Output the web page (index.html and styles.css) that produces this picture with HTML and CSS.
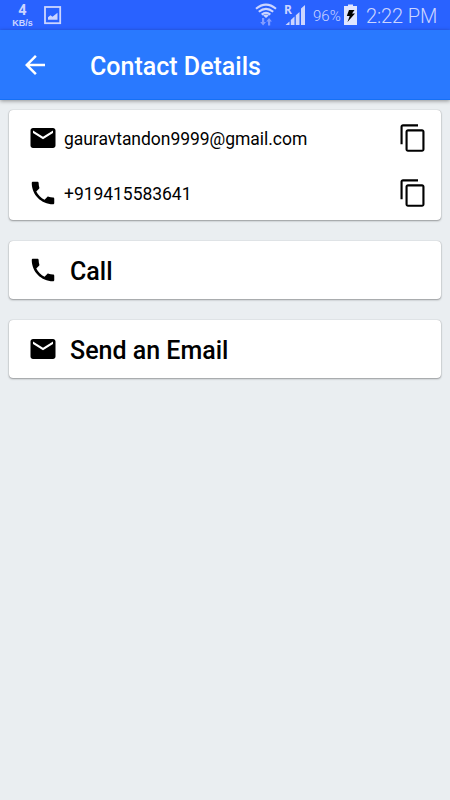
FILE: index.html
```html
<!DOCTYPE html>
<html lang="en">
<head>
    <title>Contact Details</title>
    <meta charset="UTF-8">
    <meta name="viewport" content="width=device-width, initial-scale=1.0">
    <link rel="stylesheet" href="styles.css">
</head>
<body>
    <!-- shared icons -->
    <svg class="sprite">
        <symbol id="mail" viewBox="0 0 24 24">
            <path d="M20 4H4c-1.1 0-1.99.9-1.99 2L2 18c0 1.1.9 2 2 2h16c1.1 0 2-.9 2-2V6c0-1.1-.9-2-2-2zm0 4l-8 5-8-5V6l8 5 8-5v2z"/>
        </symbol>
        <symbol id="phone" viewBox="0 0 24 24">
            <path d="M6.62 10.79c1.44 2.83 3.76 5.14 6.59 6.59l2.2-2.2c.27-.27.67-.36 1.02-.24 1.12.37 2.33.57 3.57.57.55 0 1 .45 1 1V20c0 .55-.45 1-1 1-9.39 0-17-7.61-17-17 0-.55.45-1 1-1h3.5c.55 0 1 .45 1 1 0 1.25.2 2.45.57 3.57.11.35.03.74-.25 1.02l-2.2 2.2z"/>
        </symbol>
        <symbol id="copy" viewBox="0 0 24 24">
            <path d="M16 1H4c-1.1 0-2 .9-2 2v14h1.7V2.7H16V1zm3.2 4H8c-1.1 0-2 .9-2 2v14c0 1.1.9 2 2 2h11.2c1.1 0 2-.9 2-2V7c0-1.1-.9-2-2-2zm.3 16.3H7.7V6.7h11.8v14.6z"/>
        </symbol>
    </svg>

    <div class="status-bar">
        <div class="net-speed">
            <span class="speed-value">4</span>
            <span class="speed-unit">KB/s</span>
        </div>
        <svg class="picture" width="18" height="19" viewBox="0 0 18 19">
            <rect x="1" y="1" width="15.2" height="16.2" fill="none" stroke="#ccd5ff" stroke-width="1.8"/>
            <path d="M4 13.8v-2.5l2.5-2 2 1.5 5-4v7z" fill="#ccd5ff"/>
        </svg>
        <svg class="wifi" width="22" height="24" viewBox="0 0 22 24">
            <g fill="none" stroke="#ccd5ff" stroke-width="2.1">
                <path d="M1 6.8Q11-1.4 21 6.8"/>
                <path d="M3.8 9.8Q11 3.8 18.2 9.8"/>
                <path d="M6.7 12.6Q11 9 15.3 12.6"/>
            </g>
            <path d="M8.2 13.6Q11 11.6 13.8 13.6L11 16z" fill="#ccd5ff"/>
            <path d="M7 16h2.2v4h1.8l-2.9 3.5L5.2 20H7zM13 23.5h2.2v-4H17L14.1 16l-2.9 3.5H13z" fill="#829cff"/>
        </svg>
        <div class="signal">
            <span class="roaming">R</span>
            <svg width="22" height="22" viewBox="0 0 22 22">
                <path d="M.5 21l4-3.6V21zM5.8 21v-5l3.7-3.4V21zM10.8 21v-9.8L14.5 8v13zM16 21V4.5L20 1v20z" fill="#ccd5ff"/>
            </svg>
        </div>
        <span class="percent">96%</span>
        <svg class="battery" width="14" height="22" viewBox="0 0 14 22">
            <path d="M4 .5h5V2h4v19H0V2h4z" fill="#dfe5ff"/>
            <path d="M5 6h5.5L8 9.5h3L3.5 18 5.7 12H2.8z" fill="#000"/>
        </svg>
        <span class="clock">2:22 PM</span>
    </div>

    <header class="toolbar">
        <svg class="icon back" viewBox="0 0 24 24">
            <path d="M20 11H7.83l5.59-5.59L12 4l-8 8 8 8 1.41-1.41L7.83 13H20v-2z"/>
        </svg>
        <h1>Contact Details</h1>
    </header>

    <main class="content">
        <div class="card">
            <div class="row">
                <svg class="icon"><use href="#mail"/></svg>
                <span class="detail">gauravtandon9999@gmail.com</span>
                <svg class="icon copy"><use href="#copy"/></svg>
            </div>
            <div class="row">
                <svg class="icon"><use href="#phone"/></svg>
                <span class="detail">+919415583641</span>
                <svg class="icon copy"><use href="#copy"/></svg>
            </div>
        </div>

        <div class="card action">
            <svg class="icon"><use href="#phone"/></svg>
            <span class="label">Call</span>
        </div>

        <div class="card action">
            <svg class="icon"><use href="#mail"/></svg>
            <span class="label">Send an Email</span>
        </div>
    </main>
</body>
</html>
```
FILE: styles.css
```css
* {
    box-sizing: border-box;
}
body {
    margin: 0;
    min-height: 800px;
    background-color: #eaeef1;
    color: #000;
    font-family: Roboto, sans-serif;
}
svg {
    display: block;
    flex: none;
}
.sprite {
    position: absolute;
    width: 0;
    height: 0;
}
.icon {
    width: 30px;
    height: 30px;
}
.status-bar {
    display: flex;
    align-items: flex-start;
    height: 30px;
    padding-left: 11px;
    background-color: #2962ff;
    color: #ccd5ff;
    white-space: nowrap;
}
.net-speed {
    display: flex;
    flex-direction: column;
    align-items: center;
    width: 23px;
    padding-top: 3px;
    font-family: "Liberation Sans", sans-serif;
    font-weight: bold;
}
.speed-value {
    font-family: Roboto, sans-serif;
    font-size: 14.5px;
    line-height: 15px;
}
.speed-unit {
    margin-top: 1px;
    font-size: 9px;
    line-height: 9px;
}
.picture {
    margin: 6px 0 0 10px;
}
.wifi {
    margin: 2px 0 0 193px;
}
.signal {
    position: relative;
    margin: 4px 0 0 8px;
}
.roaming {
    position: absolute;
    top: 0;
    left: -1px;
    font-family: "Open Sans", sans-serif;
    font-size: 12px;
    font-weight: bold;
    line-height: 11px;
}
.percent {
    width: 31px;
    margin-left: 6px;
    font-size: 15px;
    font-weight: 300;
    line-height: 32px;
}
.battery {
    margin-top: 4px;
}
.clock {
    margin-left: 8px;
    font-size: 20px;
    font-weight: 300;
    line-height: 32px;
    letter-spacing: -0.1px;
}
.toolbar {
    display: flex;
    align-items: center;
    height: 70px;
    padding: 0 20px;
    background-color: #2979ff;
    border-bottom: 1px solid #1670f5;
    color: #fff;
    box-shadow: 0 1px 4px rgba(0, 0, 0, 0.4);
}
.toolbar h1 {
    margin: 4px 0 0 40px;
    font-size: 25px;
    font-weight: 500;
    line-height: 30px;
}
.back {
    fill: #fff;
}
.content {
    padding: 10px 9px;
}
.card {
    margin-bottom: 21px;
    padding: 0 13.5px 0 18.5px;
    background-color: #fff;
    border-radius: 4px;
    box-shadow: 0 1px 2px rgba(0, 0, 0, 0.35), 0 0 1px rgba(0, 0, 0, 0.3);
}
.row {
    display: flex;
    align-items: center;
    height: 55px;
}
.detail {
    margin: 3px 0 0 6.5px;
    font-size: 17.5px;
    letter-spacing: -0.04px;
}
.copy {
    margin-left: auto;
}
.action {
    display: flex;
    align-items: center;
    height: 58px;
}
.label {
    margin: 3px 0 0 12.5px;
    font-size: 25px;
    font-weight: 500;
}
```
